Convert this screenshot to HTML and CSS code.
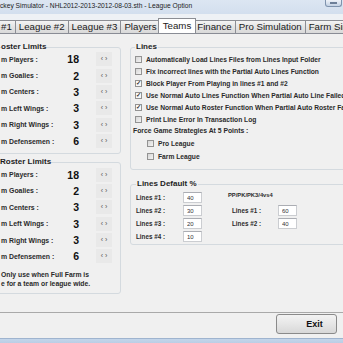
FILE: index.html
```html
<!DOCTYPE html>
<html lang="en">
  <head>
    <meta charset="UTF-8" />
    <title>League Option</title>
    <link rel="stylesheet" href="styles.css">
  </head>
  <body>
    <!-- window title bar -->
    <div class="titlebar">
      <span class="title">ckey Simulator - NHL2012-2013-2012-08-03.sth - League Option</span>
      <span class="win-btn"><i></i></span>
    </div>
    <!-- tab strip -->
    <div class="tabs">
      <div class="tab first">#1</div>
      <div class="tab">League #2</div>
      <div class="tab">League #3</div>
      <div class="tab">Players</div>
      <div class="tab active">Teams</div>
      <div class="tab">Finance</div>
      <div class="tab">Pro Simulation</div>
      <div class="tab">Farm Sim</div>
    </div>
    <!-- tab page -->
    <div class="page">
      <div class="col-left">
        <fieldset class="group roster">
          <legend>oster Limits</legend>
          <div class="limit-row"><span class="lbl">m Players :</span><span class="num">18</span><span class="spin">&#8249; &#8250;</span></div>
          <div class="limit-row"><span class="lbl">m Goalies :</span><span class="num">2</span><span class="spin">&#8249; &#8250;</span></div>
          <div class="limit-row"><span class="lbl">m Centers :</span><span class="num">3</span><span class="spin">&#8249; &#8250;</span></div>
          <div class="limit-row"><span class="lbl">m Left Wings :</span><span class="num">3</span><span class="spin">&#8249; &#8250;</span></div>
          <div class="limit-row"><span class="lbl">m Right Wings :</span><span class="num">3</span><span class="spin">&#8249; &#8250;</span></div>
          <div class="limit-row"><span class="lbl">m Defensemen :</span><span class="num">6</span><span class="spin">&#8249; &#8250;</span></div>
        </fieldset>
        <fieldset class="group roster farm">
          <legend>Roster Limits</legend>
          <div class="limit-row"><span class="lbl">m Players :</span><span class="num">18</span><span class="spin">&#8249; &#8250;</span></div>
          <div class="limit-row"><span class="lbl">m Goalies :</span><span class="num">2</span><span class="spin">&#8249; &#8250;</span></div>
          <div class="limit-row"><span class="lbl">m Centers :</span><span class="num">3</span><span class="spin">&#8249; &#8250;</span></div>
          <div class="limit-row"><span class="lbl">m Left Wings :</span><span class="num">3</span><span class="spin">&#8249; &#8250;</span></div>
          <div class="limit-row"><span class="lbl">m Right Wings :</span><span class="num">3</span><span class="spin">&#8249; &#8250;</span></div>
          <div class="limit-row"><span class="lbl">m Defensemen :</span><span class="num">6</span><span class="spin">&#8249; &#8250;</span></div>
          <p class="note">Only use when Full Farm is<br>e for a team or league wide.</p>
        </fieldset>
      </div>
      <div class="col-right">
        <!-- lines options -->
        <fieldset class="group lines">
          <legend>Lines</legend>
          <div class="check-row"><span class="box"></span>Automatically Load Lines Files from Lines Input Folder</div>
          <div class="check-row"><span class="box"></span>Fix incorrect lines with the Partial Auto Lines Function</div>
          <div class="check-row"><span class="box checked">&#10003;</span>Block Player From Playing in lines #1 and #2</div>
          <div class="check-row"><span class="box checked">&#10003;</span>Use Normal Auto Lines Function When Partial Auto Line Failed</div>
          <div class="check-row"><span class="box checked">&#10003;</span>Use Normal Auto Roster Function When Partial Auto Roster Failed</div>
          <div class="check-row"><span class="box"></span>Print Line Error In Transaction Log</div>
          <div class="force">Force Game Strategies At 5 Points :</div>
          <div class="check-row sub"><span class="box"></span>Pro League</div>
          <div class="check-row sub"><span class="box"></span>Farm League</div>
        </fieldset>
        <!-- default lines percentages -->
        <fieldset class="group defaults">
          <legend>Lines Default %</legend>
          <div class="pct-grid">
            <span class="lbl">Lines #1 :</span><input class="field" value="40" readonly>
            <span class="pp">PP/PK/PK3/4vs4</span>
            <span class="lbl">Lines #2 :</span><input class="field" value="30" readonly>
            <span class="lbl right">Lines #1 :</span><input class="field" value="60" readonly>
            <span class="lbl">Lines #3 :</span><input class="field" value="20" readonly>
            <span class="lbl right">Lines #2 :</span><input class="field" value="40" readonly>
            <span class="lbl">Lines #4 :</span><input class="field" value="10" readonly>
          </div>
        </fieldset>
      </div>
    </div>
    <!-- bottom button bar -->
    <div class="footer">
      <button class="exit">Exit</button>
    </div>
    <div class="frame-bottom"></div>
  </body>
</html>
```

FILE: styles.css
```css
/* reset */
* {
  margin: 0;
  padding: 0;
  box-sizing: border-box;
}
body {
  width: 343px;
  height: 343px;
  overflow: hidden;
  background-color: #f0f0f0;
  font-family: "Liberation Sans", Arial, sans-serif;
  color: #222;
}
/* title bar */
.titlebar {
  display: flex;
  height: 14px;
  background: linear-gradient(#dce6f2, #d3dfee);
}
.title {
  font-size: 6.7px;
  line-height: 11px;
  color: #1c1c1c;
  white-space: nowrap;
}
.win-btn {
  margin-left: auto;
  margin-right: 1px;
  width: 17px;
  height: 7px;
  border: 1px solid #7f93ad;
  border-top: none;
  border-radius: 0 0 3px 3px;
  background: linear-gradient(#eef2f8, #c4d2e4);
  display: flex;
  justify-content: center;
  align-items: center;
}
.win-btn i {
  width: 7px;
  height: 2px;
  background-color: #fff;
  border: 1px solid #6d7f98;
}
/* tabs */
.tabs {
  display: flex;
  align-items: flex-end;
  height: 20px;
  background-color: #eef1f5;
  border-bottom: 1px solid #898c95;
  white-space: nowrap;
  overflow: hidden;
}
.tab {
  flex-shrink: 0;
  height: 13px;
  line-height: 12px;
  padding: 0 3px;
  margin-left: -1px;
  font-size: 9.7px;
  color: #1a1a1a;
  border: 1px solid #8c8e94;
  border-bottom: none;
  background: linear-gradient(#f4f4f4, #e4e4e4 50%, #d9d9d9);
}
.tab.first {
  margin-left: 0;
  padding-left: 1px;
  border-left: none;
}
.tab.active {
  position: relative;
  height: 16px;
  line-height: 14px;
  margin: 0 -2px -1px -3px;
  padding: 0 4px;
  background: #fff;
  z-index: 1;
}
/* tab page */
.page {
  display: flex;
  height: 279px;
  border-bottom: 1px solid #a9a9a9;
  overflow: hidden;
}
.col-left {
  flex-shrink: 0;
  width: 127px;
  margin-left: -6px;
  margin-top: 9px;
}
.col-right {
  width: 240px;
  flex-shrink: 0;
  margin-left: 9px;
  margin-top: 9px;
}
/* group boxes */
.group {
  border: 1px solid #d4dadf;
  border-radius: 3px;
  min-width: 0;
}
.group legend {
  font-size: 8px;
  line-height: 8px;
  font-weight: bold;
  color: #1e1e1e;
  padding: 0 1px;
}
.roster {
  padding: 0 0 4px 6px;
}
.roster legend {
  padding: 0;
}
.farm {
  margin-top: 4px;
  padding-bottom: 5px;
}
.farm legend {
  margin-left: -1px;
}
/* roster limit rows */
.limit-row {
  display: flex;
  align-items: center;
  height: 16.4px;
}
.limit-row .lbl {
  width: 58px;
  font-size: 6.9px;
  font-weight: bold;
  color: #2a2a2a;
  white-space: nowrap;
}
.num {
  width: 20px;
  text-align: right;
  font-size: 10.5px;
  font-weight: bold;
  color: #111;
}
.spin {
  width: 16px;
  height: 14px;
  margin-left: 17px;
  background-color: #e9e9e9;
  font-size: 7px;
  line-height: 14px;
  color: #555;
  text-align: center;
}
.note {
  margin-top: 5px;
  font-size: 6.8px;
  line-height: 9px;
  font-weight: bold;
  color: #2a2a2a;
}
/* lines checkboxes */
.lines {
  padding: 2px 0 6px 4px;
}
.check-row {
  display: flex;
  align-items: center;
  gap: 4px;
  height: 12px;
  font-size: 6.7px;
  font-weight: bold;
  color: #2a2a2a;
  white-space: nowrap;
}
.box {
  flex-shrink: 0;
  width: 7px;
  height: 7px;
  border: 1px solid #939393;
  background: linear-gradient(135deg, #d6d6d6, #f4f4f4);
  font-size: 6px;
  line-height: 5px;
  text-align: center;
  color: #333;
}
.box.checked {
  background: #f7f7f7;
}
.force {
  margin-left: -2px;
  height: 12px;
  line-height: 12px;
  font-size: 6.8px;
  font-weight: bold;
  color: #2a2a2a;
}
.check-row.sub {
  height: 13px;
  padding-left: 12px;
}
/* lines default percentages */
.defaults {
  margin-top: 10px;
  padding: 3px 0 1px 5px;
}
.pct-grid {
  display: grid;
  grid-template-columns: 47px 19px 26px 50px 19px;
  grid-auto-rows: 13px;
  align-items: center;
}
.pct-grid .lbl {
  grid-column: 1;
  font-size: 6.3px;
  font-weight: bold;
  color: #2a2a2a;
}
.pct-grid .lbl.right {
  grid-column: 4;
  padding-left: 4px;
}
.pp {
  grid-column: 4 / 6;
  align-self: start;
  margin-top: 1px;
  font-size: 5.8px;
  font-weight: bold;
  color: #2a2a2a;
}
.field {
  width: 19px;
  height: 11px;
  border: 1px solid #cbcdd1;
  border-top-color: #abadb3;
  background: #fff;
  padding-left: 3px;
  font-family: "Liberation Sans", Arial, sans-serif;
  font-size: 6px;
  color: #333;
  outline: none;
}
/* footer with exit button */
.footer {
  display: flex;
  justify-content: flex-end;
  height: 25px;
  padding: 1px 6px 0 0;
}
.exit {
  width: 61px;
  height: 20px;
  border: 1px solid #8a8a8a;
  border-radius: 3px;
  background: linear-gradient(#f3f3f3, #e6e6e6 50%, #d8d8d8);
  font-family: "Liberation Sans", Arial, sans-serif;
  font-size: 9px;
  font-weight: bold;
  color: #111;
  padding-left: 16px;
}
.frame-bottom {
  height: 6px;
  background: linear-gradient(#c3d5ea, #b8cce4);
  border-top: 1px solid #9fb4cf;
}
```
